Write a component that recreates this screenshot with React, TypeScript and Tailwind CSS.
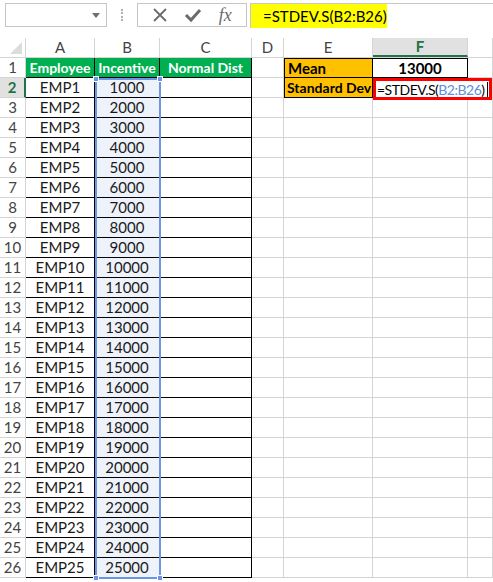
import React from "react";

const cols = [
  { id: "A", w: 69 },
  { id: "B", w: 65 },
  { id: "C", w: 92 },
  { id: "D", w: 32 },
  { id: "E", w: 89 },
  { id: "F", w: 95 },
  { id: "G", w: 25 },
];

const font = { fontFamily: "Lato, 'Liberation Sans', sans-serif" };

const rows = Array.from({ length: 25 }, (_, i) => ({
  emp: `EMP${i + 1}`,
  val: String((i + 1) * 1000),
}));

function FormulaBar() {
  return (
    <div className="h-[38px] relative flex items-start pt-[3px]">
      {/* name box */}
      <div className="ml-[5px] w-[102px] h-[24px] border border-[#c6c6c6] flex items-center justify-end pr-[6px]">
        <svg width="8" height="5" viewBox="0 0 8 5">
          <path d="M0 0 L8 0 L4 5 Z" fill="#6f6f6f" />
        </svg>
      </div>
      <div className="w-[30px] h-[24px] flex items-center justify-center">
        <div className="w-[2px] h-[12px] border-l-2 border-dotted border-[#b0b0b0]" />
      </div>
      {/* buttons */}
      <div className="w-[110px] h-[24px] border border-[#c6c6c6] flex items-center justify-around px-[6px]">
        <svg width="16" height="16" viewBox="0 0 16 16">
          <path d="M2 2 L14 14 M14 2 L2 14" stroke="#6b6b6b" strokeWidth="1.8" />
        </svg>
        <svg width="18" height="16" viewBox="0 0 18 16">
          <path d="M2 8 L7 13 L16 3" stroke="#6b6b6b" strokeWidth="3" fill="none" />
        </svg>
        <span className="text-[#6b6b6b] italic text-[18px] leading-none" style={{ fontFamily: "'Liberation Serif', serif" }}>
          fx
        </span>
      </div>
      {/* formula field */}
      <div className="ml-[3px] flex-1 h-[25px] border-l border-t border-[#c6c6c6] flex">
        <div className="w-[136px] h-full bg-[#ffff00] flex items-center pl-[12px] text-[15px] text-black" style={font}>
          =STDEV.S(B2:B26)
        </div>
      </div>
    </div>
  );
}

function HeaderRow() {
  return (
    <div className="flex h-[20px] border-b border-[#d4d4d4] text-[15px] text-[#444]" style={font}>
      <div className="w-[26px] shrink-0 border-r border-[#d4d4d4] relative">
        <svg className="absolute right-[3px] bottom-[3px]" width="12" height="12" viewBox="0 0 12 12">
          <path d="M12 0 L12 12 L0 12 Z" fill="#dcdcdc" />
        </svg>
      </div>
      {cols.map((c) => (
        <div
          key={c.id}
          className={`shrink-0 flex items-center justify-center border-r border-[#d4d4d4] ${
            c.id === "F" ? "bg-[#e1e1e1] text-[#217346] font-bold border-b-2 border-b-[#217346]" : ""
          }`}
          style={{ width: c.w }}
        >
          {c.id === "G" ? "" : c.id}
        </div>
      ))}
    </div>
  );
}

function RowHead({ n }: { n: number }) {
  const sel = n === 2;
  return (
    <div
      className={`w-[26px] shrink-0 flex items-center justify-center text-[15px] border-r border-b border-[#d4d4d4] ${
        sel ? "bg-[#e1e1e1] text-[#217346] font-bold border-r-2 border-r-[#217346]" : "text-[#444]"
      }`}
    >
      {n}
    </div>
  );
}

function Grid({ w, className = "", children }: { w: number; className?: string; children?: React.ReactNode }) {
  return (
    <div
      className={`shrink-0 flex items-center justify-center whitespace-nowrap overflow-visible border-r border-b ${className}`}
      style={{ width: w }}
    >
      {children}
    </div>
  );
}

export default function App() {
  return (
    <div className="w-[493px] h-[582px] bg-white overflow-hidden relative" style={font}>
      <FormulaBar />
      <HeaderRow />
      {/* row 1 */}
      <div className="flex h-[20px] text-[14px]">
        <RowHead n={1} />
        <Grid w={69} className="bg-[#00b050] text-white font-bold border-black">Employee</Grid>
        <Grid w={65} className="bg-[#00b050] text-white font-bold border-black">Incentive</Grid>
        <Grid w={92} className="bg-[#00b050] text-white font-bold border-black">Normal Dist</Grid>
        <Grid w={32} className="border-[#d4d4d4]" />
        <Grid w={89} className="bg-[#ffc000] text-black font-bold border-black justify-start! pl-[3px] border-l border-t text-[15px]">Mean</Grid>
        <Grid w={95} className="text-black font-bold border-black border-t text-[15px]">13000</Grid>
        <Grid w={25} className="border-[#d4d4d4]" />
      </div>
      {/* rows 2-26 */}
      {rows.map((r, i) => {
        const n = i + 2;
        return (
          <div key={n} className="flex h-[20px] text-[15px] text-[#1a1a1a]">
            <RowHead n={n} />
            <Grid w={69} className="border-black">{r.emp}</Grid>
            <Grid w={65} className="border-black bg-[#eef2fb]">{r.val}</Grid>
            <Grid w={92} className="border-black" />
            <Grid w={32} className="border-[#d4d4d4]" />
            {n === 2 ? (
              <Grid w={89} className="bg-[#ffc000] text-black font-bold border-black justify-start! pl-[2px] border-l text-[14px]">
                Standard Dev
              </Grid>
            ) : (
              <Grid w={89} className="border-[#d4d4d4]" />
            )}
            {n === 2 ? (
              <Grid w={95} className="border-black" />
            ) : (
              <Grid w={95} className="border-[#d4d4d4]" />
            )}
            <Grid w={25} className="border-[#d4d4d4]" />
          </div>
        );
      })}

      {/* selection B2:B26 */}
      <div className="absolute left-[95px] top-[78px] w-[66px] h-[501px] border-2 border-[#6b96e8] pointer-events-none">
        <div className="absolute -left-[4px] -top-[4px] w-[6px] h-[6px] bg-[#6b96e8] border border-white" />
        <div className="absolute -right-[4px] -top-[4px] w-[6px] h-[6px] bg-[#6b96e8] border border-white" />
        <div className="absolute -left-[4px] -bottom-[4px] w-[6px] h-[6px] bg-[#6b96e8] border border-white" />
        <div className="absolute -right-[4px] -bottom-[4px] w-[6px] h-[6px] bg-[#6b96e8] border border-white" />
      </div>

      {/* active cell F2 editing */}
      <div className="absolute left-[373px] top-[78px] w-[119px] h-[22px] border-[3px] border-[#ff0000] bg-white flex items-center pl-[1px] text-[14px] tracking-[-0.5px] text-black whitespace-nowrap overflow-hidden">
        <span>=STDEV.S(</span>
        <span className="text-[#5b8fd9]">B2:B26</span>
        <span>)</span>
        <span className="ml-[2px] w-[1px] h-[15px] bg-black shrink-0" />
      </div>
    </div>
  );
}
